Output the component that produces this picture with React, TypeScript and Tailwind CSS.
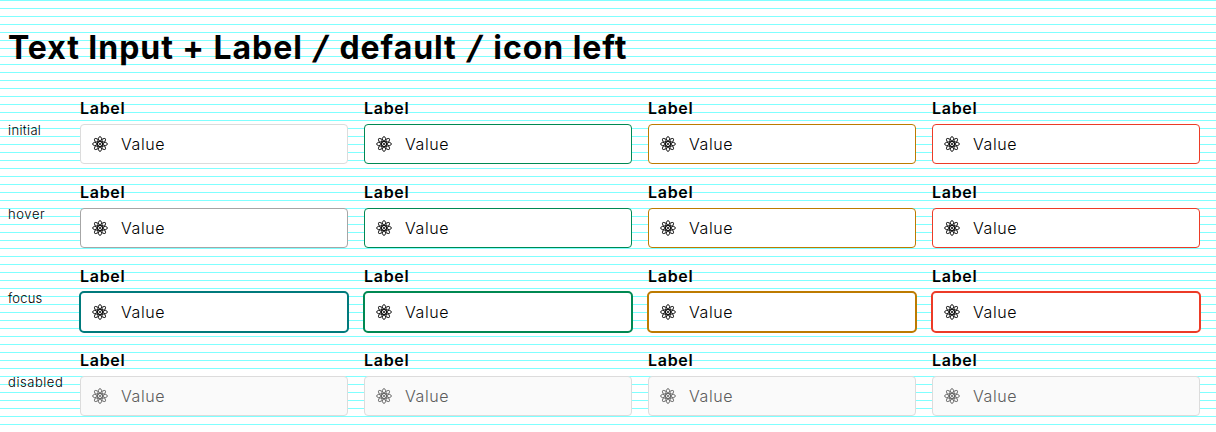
const columns = [
  { name: 'neutral', initial: 'border-[#dcdcdc]', hover: 'border-[#a6a6a6]', focus: 'border-[#007a7c]' },
  { name: 'success', initial: 'border-[#008952]', hover: 'border-[#008952]', focus: 'border-[#008952]' },
  { name: 'warning', initial: 'border-[#bd7b00]', hover: 'border-[#bd7b00]', focus: 'border-[#bd7b00]' },
  { name: 'error', initial: 'border-[#ec3b27]', hover: 'border-[#ec3b27]', focus: 'border-[#ec3b27]' },
];

const states = [
  { name: 'initial', spacing: 'tracking-[0.35px]' },
  { name: 'hover', spacing: 'tracking-[0.6px]' },
  { name: 'focus', spacing: 'tracking-[0.2px]' },
  { name: 'disabled', spacing: 'tracking-[0.55px]' },
] as const;

type State = (typeof states)[number]['name'];

function AtomIcon() {
  return (
    <svg viewBox="0 0 16 16" className="h-4 w-4 shrink-0" fill="none" stroke="currentColor" strokeWidth="0.9">
      {[0, 45, 90, 135].map((angle) => (
        <ellipse key={angle} cx="8" cy="8" rx="2.35" ry="7.5" transform={`rotate(${angle} 8 8)`} />
      ))}
      <circle cx="8" cy="8" r="1" fill="currentColor" stroke="none" />
    </svg>
  );
}

function Slash() {
  return <span className="inline-block w-[19.5px] -skew-x-12 text-center tracking-normal">/</span>;
}

function Field({ state, column }: { state: State; column: (typeof columns)[number] }) {
  const look =
    state === 'disabled'
      ? 'h-10 border border-[#dcdcdc] bg-[#fafafa] text-[#5c5c5c] rounded-[4px]'
      : state === 'focus'
        ? `-m-px h-[42px] border-2 bg-white text-black rounded-[5px] ${column.focus}`
        : `h-10 border bg-white text-black rounded-[4px] ${column[state]}`;
  return (
    <div className="h-[68px]">
      <div className="h-7 text-base leading-6 font-semibold tracking-[0.7px] text-black">Label</div>
      <div className={`flex items-center gap-[13px] pl-[11px] ${look}`}>
        <AtomIcon />
        <span className="text-base leading-6 font-light tracking-[0.6px]">Value</span>
      </div>
    </div>
  );
}

export default function App() {
  return (
    <main className="h-[432px] w-[1216px] overflow-hidden bg-white bg-[linear-gradient(to_bottom,#80ffff_1px,transparent_1px)] bg-[length:100%_8px] px-2 pt-7 font-['Inter',sans-serif] text-black">
      <h1 className="h-[68px] text-[32px] leading-10 font-bold tracking-[0.95px] whitespace-nowrap">
        Text Input + Label <Slash /> default <Slash /> icon left
      </h1>
      <div className="flex flex-col gap-4">
        {states.map((state) => (
          <div key={state.name} className="flex">
            <div className={`w-[72px] shrink-0 pt-6 text-[13px] leading-5 font-light ${state.spacing}`}>{state.name}</div>
            <div className="grid grid-cols-[repeat(4,268px)] gap-4">
              {columns.map((column) => (
                <Field key={column.name} state={state.name} column={column} />
              ))}
            </div>
          </div>
        ))}
      </div>
    </main>
  );
}
